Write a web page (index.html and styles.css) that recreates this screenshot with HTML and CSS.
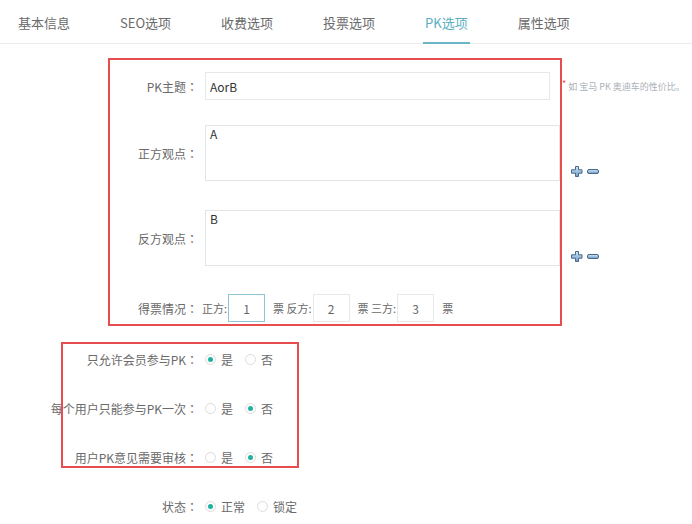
FILE: index.html
```html
<!DOCTYPE html>
<html lang="zh-CN">
<head>
    <meta charset="UTF-8">
    <meta name="viewport" content="width=device-width, initial-scale=1.0">
    <title>PK选项</title>
    <link rel="stylesheet" href="styles.css">
</head>
<body>
    <div class="page">
        <div class="tabs">
            <span class="tab">基本信息</span>
            <span class="tab">SEO选项</span>
            <span class="tab">收费选项</span>
            <span class="tab">投票选项</span>
            <span class="tab active">PK选项</span>
            <span class="tab">属性选项</span>
        </div>

        <div class="form">
            <div class="row row-title">
                <label class="label">PK主题<span class="colon" lang="zh-TW">：</span></label>
                <input class="text" type="text" value="AorB">
                <span class="tip"><em>*</em>如 宝马 PK 奥迪车的性价比。</span>
            </div>

            <div class="row row-area row-pro">
                <label class="label">正方观点<span class="colon" lang="zh-TW">：</span></label>
                <textarea class="area">A</textarea>
                <span class="ops">
                    <svg class="op" width="12" height="11" viewBox="0 0 12 11"><defs><linearGradient id="g1" x1="0" y1="0" x2="0" y2="1"><stop offset="0" stop-color="#d6e8f6"/><stop offset="1" stop-color="#6d9bc4"/></linearGradient></defs><path d="M4.5 .5h3v3.3h3.5v3.4h-3.5v3.3h-3v-3.3h-4v-3.4h4z" fill="url(#g1)" stroke="#46698d" stroke-width="1"/></svg>
                    <svg class="op" width="12" height="5" viewBox="0 0 12 5"><defs><linearGradient id="g2" x1="0" y1="0" x2="0" y2="1"><stop offset="0" stop-color="#d6e8f6"/><stop offset="1" stop-color="#6d9bc4"/></linearGradient></defs><rect x=".5" y=".5" width="11" height="4" rx="1.5" fill="url(#g2)" stroke="#46698d" stroke-width="1"/></svg>
                </span>
            </div>

            <div class="row row-area row-con">
                <label class="label">反方观点<span class="colon" lang="zh-TW">：</span></label>
                <textarea class="area">B</textarea>
                <span class="ops">
                    <svg class="op" width="12" height="11" viewBox="0 0 12 11"><path d="M4.5 .5h3v3.3h3.5v3.4h-3.5v3.3h-3v-3.3h-4v-3.4h4z" fill="url(#g1)" stroke="#46698d" stroke-width="1"/></svg>
                    <svg class="op" width="12" height="5" viewBox="0 0 12 5"><rect x=".5" y=".5" width="11" height="4" rx="1.5" fill="url(#g2)" stroke="#46698d" stroke-width="1"/></svg>
                </span>
            </div>

            <div class="row row-votes">
                <label class="label">得票情况<span class="colon" lang="zh-TW">：</span></label>
                <div class="votes">
                    <span>正方:</span><input class="num focus" type="text" value="1">
                    <span>票 反方:</span><input class="num" type="text" value="2">
                    <span>票 三方:</span><input class="num" type="text" value="3">
                    <span>票</span>
                </div>
            </div>

            <div class="row row-radio">
                <label class="label">只允许会员参与PK<span class="colon" lang="zh-TW">：</span></label>
                <span class="option"><i class="radio on"></i>是</span>
                <span class="option"><i class="radio"></i>否</span>
            </div>

            <div class="row row-radio">
                <label class="label">每个用户只能参与PK一次<span class="colon" lang="zh-TW">：</span></label>
                <span class="option"><i class="radio"></i>是</span>
                <span class="option"><i class="radio on"></i>否</span>
            </div>

            <div class="row row-radio">
                <label class="label">用户PK意见需要审核<span class="colon" lang="zh-TW">：</span></label>
                <span class="option"><i class="radio"></i>是</span>
                <span class="option"><i class="radio on"></i>否</span>
            </div>

            <div class="row row-radio">
                <label class="label">状态<span class="colon" lang="zh-TW">：</span></label>
                <span class="option"><i class="radio on"></i>正常</span>
                <span class="option"><i class="radio"></i>锁定</span>
            </div>
        </div>

        <!-- 标注框 -->
        <div class="mark mark-pk"></div>
        <div class="mark mark-rule"></div>
    </div>
</body>
</html>
```

FILE: styles.css
```css
* {
    margin: 0;
    padding: 0;
    box-sizing: border-box;
}

body {
    font-family: "Noto Sans CJK SC", "Liberation Sans", sans-serif;
    font-size: 12px;
    color: #6a6a6a;
    background: #fff;
}

.page {
    position: relative;
    width: 692px;
    height: 524px;
    overflow: hidden;
}

.tabs {
    display: flex;
    height: 44px;
    padding-left: 18px;
    border-bottom: 1px solid #e8eced;
}

.tab {
    height: 44px;
    padding-top: 5px;
    line-height: 36px;
    margin-right: 50px;
    font-size: 13px;
    color: #6a6a6a;
    border-bottom: 2px solid transparent;
}

.tab.active {
    color: #5aaec0;
    border-bottom-color: #6ab6c6;
    padding: 5px 2px 0;
    margin: 0 48px 0 -2px;
}

.form {
    padding-top: 28px;
}

.row {
    display: flex;
    align-items: center;
    height: 28px;
}

.label {
    flex: none;
    width: 198px;
    text-align: right;
    white-space: nowrap;
    margin-right: 7px;
}

/* 冒号居中显示 */
.colon {
    font-family: "Noto Sans CJK TC", sans-serif;
}

.row-title {
    margin-bottom: 25px;
}

.row-area {
    height: 56px;
}

.row-pro {
    margin-bottom: 29px;
}

.row-con {
    margin-bottom: 28px;
}

.row-votes {
    margin-bottom: 23px;
}

.row-radio {
    margin-bottom: 21px;
}

.text,
.area,
.num {
    font-family: inherit;
    font-size: 12px;
    color: #333;
    border: 1px solid #e6e8ea;
    background: #fff;
    outline: none;
}

.text {
    width: 345px;
    height: 28px;
    padding: 0 4px;
}

.area {
    width: 355px;
    height: 56px;
    padding: 0 4px;
    line-height: 16px;
    resize: none;
    border-color: #e1e5e8;
}

.tip {
    margin-left: 12px;
    font-size: 9px;
    color: #aab1b8;
    white-space: nowrap;
}

.tip em {
    font-style: normal;
    color: #e84c4c;
    position: relative;
    top: -3px;
    margin-right: 2px;
}

.ops {
    display: flex;
    align-items: center;
    gap: 4px;
    align-self: flex-end;
    margin: 0 0 4px 11px;
}

.op {
    display: block;
}

.votes {
    display: flex;
    align-items: center;
    margin-left: -3px;
    font-size: 11px;
}

.num {
    width: 37px;
    height: 28px;
    margin: 0 8px 0 1px;
    text-align: center;
    color: #666;
}

.num.focus {
    border-color: #8cc6d2;
}

.option {
    display: flex;
    align-items: center;
    margin-right: 12px;
}

.radio {
    width: 11px;
    height: 11px;
    margin-right: 5px;
    border: 1px solid #dcdcdc;
    border-radius: 50%;
    display: flex;
    align-items: center;
    justify-content: center;
}

.radio.on::after {
    content: "";
    width: 5px;
    height: 5px;
    border-radius: 50%;
    background: #1eb3a1;
}

.mark {
    position: absolute;
    border: 2px solid #e84c4c;
    pointer-events: none;
}

.mark-pk {
    left: 108px;
    top: 58px;
    width: 454px;
    height: 268px;
}

.mark-rule {
    left: 61px;
    top: 342px;
    width: 238px;
    height: 126px;
}
```
